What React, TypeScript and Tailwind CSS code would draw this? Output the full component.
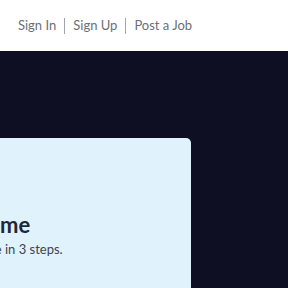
export default function App() {
  return (
    <div className="w-[288px] h-[288px] overflow-hidden flex flex-col bg-[#0e0f23]" style={{ fontFamily: "Lato, 'Noto Sans', sans-serif" }}>
      <header className="h-[51px] shrink-0 bg-white flex items-center pl-[18px] text-[13px] text-[#6b6f78]">
        <span>Sign In</span>
        <span className="mx-[8px] w-px h-[16px] bg-[#a0a4ab]"></span>
        <span>Sign Up</span>
        <span className="mx-[8px] w-px h-[16px] bg-[#a0a4ab]"></span>
        <span>Post a Job</span>
      </header>
      <div className="flex-1 pt-[87px]">
        <div className="w-[191px] h-full bg-[#e0f3fd] rounded-tr-[5px] overflow-hidden flex flex-col pt-[74px]">
          <h1 className="-ml-[62px] whitespace-nowrap text-[22px] leading-[26px] font-bold text-[#1d2738]">Welcome</h1>
          <p className="-ml-[103px] mt-[3px] whitespace-nowrap text-[13px] leading-[16px] text-[#3d4350]">Set up your profile in 3 steps.</p>
        </div>
      </div>
    </div>
  );
}
